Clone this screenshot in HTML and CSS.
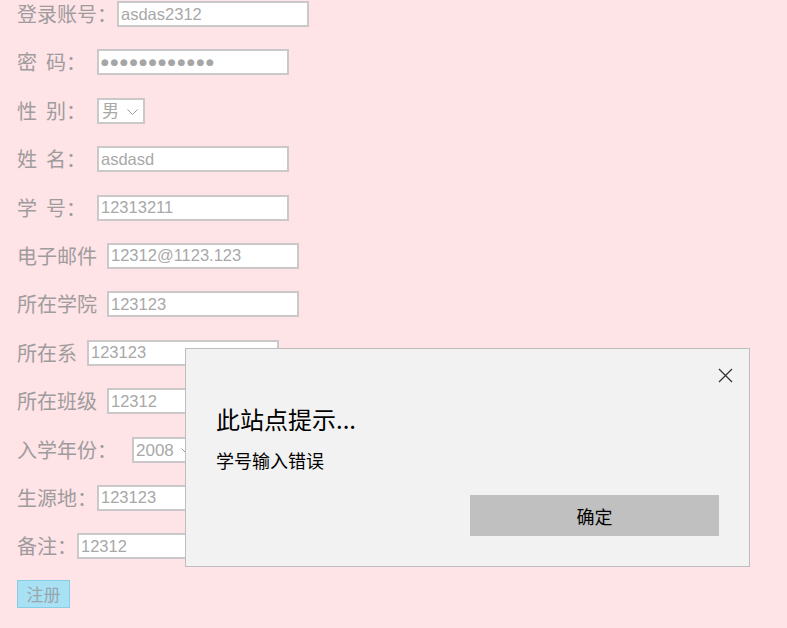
FILE: index.html
```html
<!DOCTYPE html>
<html lang="zh-CN">
<head>
<meta charset="utf-8">
<title>注册</title>
<link rel="stylesheet" href="styles.css">
</head>
<body>
<form class="reg">
  <div class="row"><span class="lbl w100">登录账号：</span><input class="field" type="text" value="asdas2312"></div>
  <div class="row"><span class="lbl w80">密&nbsp;&nbsp;码：</span><input class="field pwd" type="text" value="●●●●●●●●●●●●"></div>
  <div class="row"><span class="lbl w80">性&nbsp;&nbsp;别：</span><span class="sel s-sex"><select><option>男</option></select><svg class="chev" width="11" height="6" viewBox="0 0 11 6"><path d="M0.5 0.5 L5.5 5.5 L10.5 0.5" fill="none" stroke="#9a9a9a" stroke-width="1"/></svg></span></div>
  <div class="row"><span class="lbl w80">姓&nbsp;&nbsp;名：</span><input class="field" type="text" value="asdasd"></div>
  <div class="row"><span class="lbl w80">学&nbsp;&nbsp;号：</span><input class="field" type="text" value="12313211"></div>
  <div class="row"><span class="lbl w90">电子邮件</span><input class="field" type="text" value="12312@1123.123"></div>
  <div class="row"><span class="lbl w90">所在学院</span><input class="field" type="text" value="123123"></div>
  <div class="row"><span class="lbl w70">所在系</span><input class="field" type="text" value="123123"></div>
  <div class="row"><span class="lbl w90">所在班级</span><input class="field" type="text" value="12312"></div>
  <div class="row"><span class="lbl w115">入学年份：</span><span class="sel s-year"><select><option>2008</option></select><svg class="chev" width="11" height="6" viewBox="0 0 11 6"><path d="M0.5 0.5 L5.5 5.5 L10.5 0.5" fill="none" stroke="#9a9a9a" stroke-width="1"/></svg></span></div>
  <div class="row"><span class="lbl w80">生源地：</span><input class="field" type="text" value="123123"></div>
  <div class="row"><span class="lbl w60">备注：</span><input class="field" type="text" value="12312"></div>
  <button class="submit" type="button">注册</button>
</form>

<div class="dialog">
  <div class="dlg-head">
    <svg class="close" width="15" height="15" viewBox="0 0 15 15"><path d="M1 1 L14 14 M14 1 L1 14" stroke="#333" stroke-width="1.3" fill="none"/></svg>
  </div>
  <div class="dlg-title">此站点提示...</div>
  <div class="dlg-msg">学号输入错误</div>
  <div class="dlg-foot"><button class="ok" type="button">确定</button></div>
</div>
</body>
</html>
```

FILE: styles.css
```css
html, body {
  margin: 0;
  padding: 0;
}
body {
  background: #fee3e7;
  min-height: 628px;
  overflow: hidden;
  font-family: "Noto Sans CJK SC", "Liberation Sans", sans-serif;
}
.reg {
  display: flex;
  flex-direction: column;
  align-items: flex-start;
  gap: 22.4px;
  padding: 1px 0 0 17px;
}
.row {
  display: flex;
  align-items: center;
  height: 26px;
}
.lbl {
  font-size: 20px;
  line-height: 26px;
  color: #a09c9d;
  white-space: nowrap;
  flex: none;
}
.w60 { width: 60px; }
.w70 { width: 70px; }
.w80 { width: 80px; }
.w90 { width: 90px; }
.w100 { width: 100px; }
.w115 { width: 115px; }
.field {
  box-sizing: border-box;
  width: 192px;
  height: 26px;
  margin: 0;
  padding: 0 0 0 2px;
  border: 2px solid #cbc8c9;
  background: #fff;
  color: #a8a8a8;
  font-family: "Liberation Sans", Arial, sans-serif;
  font-size: 16.5px;
  outline: none;
}
.pwd {
  font-family: "DejaVu Sans", sans-serif;
  font-size: 9px;
  letter-spacing: 1.7px;
  color: #a6a6a6;
}
.sel {
  position: relative;
  display: inline-block;
  height: 26px;
}
.sel select {
  -webkit-appearance: none;
  appearance: none;
  box-sizing: border-box;
  height: 26px;
  margin: 0;
  border: 2px solid #cbc8c9;
  border-radius: 0;
  background: #fff;
  color: #a8a8a8;
  font-family: "Liberation Sans", "Noto Sans CJK SC", sans-serif;
  font-size: 17px;
  outline: none;
}
.s-sex select { width: 48px; padding: 0 0 0 3px; }
.s-year select { width: 67px; padding: 0 0 0 2px; }
.chev {
  position: absolute;
  right: 7px;
  top: 11px;
}
.submit {
  margin-top: -1.8px;
  box-sizing: border-box;
  width: 53px;
  height: 28px;
  padding: 0;
  border: 1px solid #87cde6;
  background: #a8e0f4;
  color: #98a6ad;
  font-family: "Noto Sans CJK SC", sans-serif;
  font-size: 17px;
}
.dialog {
  position: absolute;
  left: 185px;
  top: 348px;
  box-sizing: border-box;
  width: 565px;
  height: 219px;
  border: 1px solid #bdbdbd;
  background: #f2f2f2;
  padding: 19px 30px 0 30px;
  display: flex;
  flex-direction: column;
  font-family: "Noto Sans CJK SC", sans-serif;
  color: #000;
}
.dlg-head {
  display: flex;
  justify-content: flex-end;
  height: 15px;
  margin-right: -14px;
}
.dlg-title {
  margin-top: 20px;
  font-size: 24px;
  line-height: 32px;
}
.dlg-msg {
  margin-top: 13px;
  font-size: 18px;
  line-height: 24px;
}
.dlg-foot {
  margin-top: 23px;
  display: flex;
  justify-content: flex-end;
}
.ok {
  width: 249px;
  height: 41px;
  border: none;
  background: #c0c0c0;
  color: #000;
  font-family: "Noto Sans CJK SC", sans-serif;
  font-size: 18px;
  padding: 0;
}
```
